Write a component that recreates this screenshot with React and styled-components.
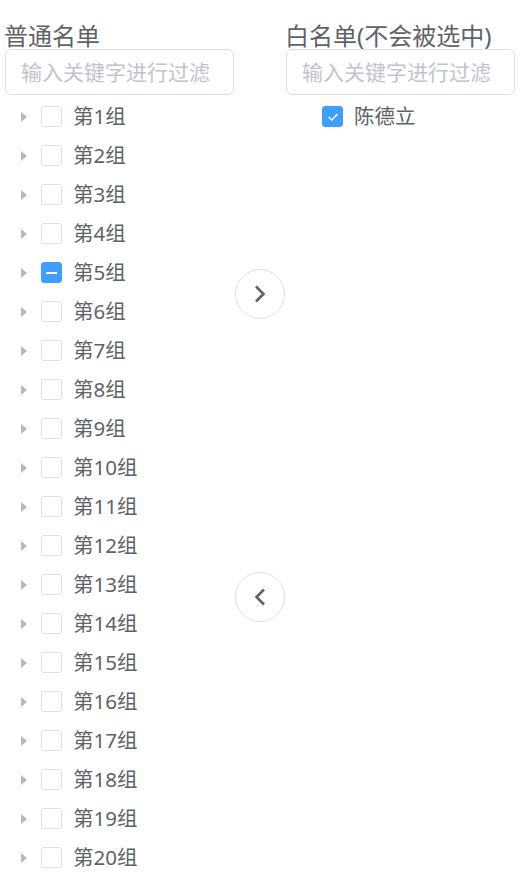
import React from "react";
import styled, { createGlobalStyle } from "styled-components";

const GlobalStyle = createGlobalStyle`
  html, body {
    margin: 0;
    padding: 0;
    background: #fff;
  }
  body {
    font-family: "Noto Sans", "Noto Sans CJK SC", sans-serif;
    color: #606266;
  }
`;

const groups = Array.from({ length: 20 }, (_, i) => ({
  name: `第${i + 1}组`,
  state: i === 4 ? "half" : "none",
}));

const App = () => {
  return (
    <>
      <GlobalStyle />
      <Transfer>
        <Panel>
          <Title>普通名单</Title>
          <Filter placeholder="输入关键字进行过滤" />
          <Tree>
            {groups.map((g) => (
              <Node key={g.name}>
                <Caret />
                <Check state={g.state} />
                <Label>{g.name}</Label>
              </Node>
            ))}
          </Tree>
        </Panel>
        <Actions>
          <RoundButton>
            <svg width="12" height="18" viewBox="0 0 12 18">
              <polyline
                points="2,1.5 9.5,9 2,16.5"
                fill="none"
                stroke="#606266"
                strokeWidth="2.6"
              />
            </svg>
          </RoundButton>
          <RoundButton>
            <svg width="12" height="18" viewBox="0 0 12 18">
              <polyline
                points="10,1.5 2.5,9 10,16.5"
                fill="none"
                stroke="#606266"
                strokeWidth="2.6"
              />
            </svg>
          </RoundButton>
        </Actions>
        <Panel>
          <Title>白名单(不会被选中)</Title>
          <Filter placeholder="输入关键字进行过滤" />
          <List>
            <Item>
              <Check state="on" />
              <Label>陈德立</Label>
            </Item>
          </List>
        </Panel>
      </Transfer>
    </>
  );
};

const Check = ({ state }) => (
  <Box $state={state}>
    {state === "on" && (
      <svg width="12" height="10" viewBox="0 0 12 10">
        <polyline
          points="1.5,5 4.8,8 10.5,2"
          fill="none"
          stroke="#fff"
          strokeWidth="1.5"
        />
      </svg>
    )}
    {state === "half" && <Dash />}
  </Box>
);

const Transfer = styled.div`
  display: flex;
  padding: 23px 10px 0 5px;
`;

const Panel = styled.div`
  width: 229px;
  display: flex;
  flex-direction: column;
`;

const Title = styled.div`
  font-size: 24px;
  line-height: 26px;
  margin-left: -1px;
  white-space: nowrap;
`;

const Filter = styled.input`
  box-sizing: border-box;
  width: 229px;
  height: 46px;
  border: 1.5px solid #dcdfe6;
  border-radius: 6px;
  padding: 0 15px;
  font-family: inherit;
  font-size: 21px;
  color: #606266;
  outline: none;
  &::placeholder {
    color: #c0c4cc;
  }
`;

const Tree = styled.div`
  margin-top: 2px;
`;

const Node = styled.div`
  display: flex;
  align-items: center;
  height: 39px;
`;

const Caret = styled.span`
  width: 0;
  height: 0;
  margin: 0 14px 0 16px;
  border-left: 6px solid #b4b7bd;
  border-top: 5px solid transparent;
  border-bottom: 5px solid transparent;
`;

const Box = styled.span`
  box-sizing: border-box;
  width: 21px;
  height: 21px;
  border-radius: 3px;
  display: flex;
  align-items: center;
  justify-content: center;
  border: 1.5px solid
    ${(p) => (p.$state === "none" ? "#dcdfe6" : "#409eff")};
  background: ${(p) => (p.$state === "none" ? "#fff" : "#409eff")};
`;

const Dash = styled.span`
  width: 11px;
  height: 2px;
  background: #fff;
`;

const Label = styled.span`
  margin-left: 11px;
  font-size: 20.5px;
  line-height: 1;
  color: #606266;
  white-space: nowrap;
`;

const List = styled.div`
  margin-top: 2px;
  padding-left: 36px;
`;

const Item = styled.div`
  display: flex;
  align-items: center;
  height: 39px;
`;

const Actions = styled.div`
  width: 52px;
  display: flex;
  flex-direction: column;
  align-items: center;
  padding-top: 246px;
  gap: 253px;
`;

const RoundButton = styled.button`
  box-sizing: border-box;
  width: 50px;
  height: 50px;
  border-radius: 50%;
  border: 1.5px solid #dcdfe6;
  background: #fff;
  display: flex;
  align-items: center;
  justify-content: center;
  padding: 0;
  cursor: pointer;
`;

export default App;
